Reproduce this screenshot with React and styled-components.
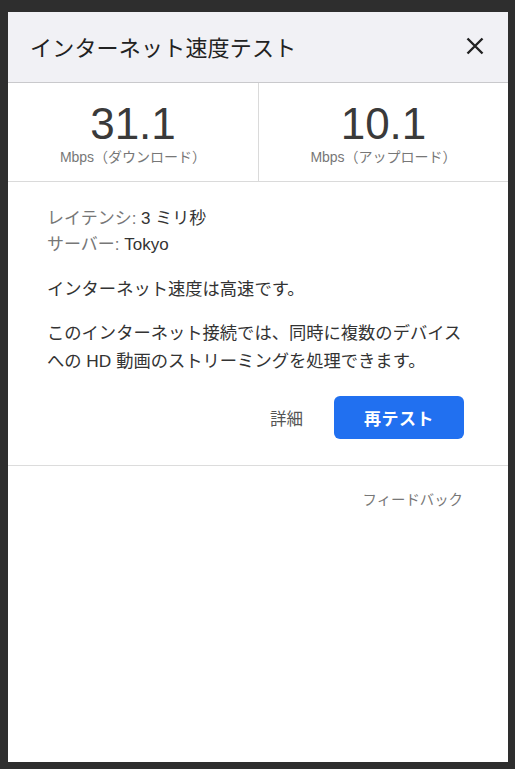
import React from "react";
import styled, { createGlobalStyle } from "styled-components";

const Global = createGlobalStyle`
  html, body { margin: 0; padding: 0; background: #2e2e2e; }
  body { font-family: "Liberation Sans", "Noto Sans CJK JP", sans-serif; }
  * { box-sizing: border-box; }
`;

const Backdrop = styled.div`
  width: 515px;
  height: 769px;
  padding: 12px 7px 7px 8px;
  background: #2e2e2e;
`;

const Dialog = styled.div`
  width: 500px;
  height: 750px;
  background: #fff;
  display: flex;
  flex-direction: column;
`;

const Header = styled.div`
  height: 71px;
  background: #f1f1f5;
  border-bottom: 1px solid #c9c9cc;
  display: flex;
  align-items: center;
  justify-content: space-between;
  padding: 0 24px 2px 22px;
`;

const Title = styled.h1`
  margin: 0;
  font-size: 22px;
  font-weight: 400;
  color: #222;
  letter-spacing: 0.2px;
`;

const CloseButton = styled.button`
  border: 0;
  background: none;
  padding: 0;
  width: 18px;
  height: 18px;
  display: flex;
  cursor: pointer;
`;

const Stats = styled.div`
  display: grid;
  grid-template-columns: 1fr 1fr;
  height: 99px;
  border-bottom: 1px solid #dadada;
`;

const Stat = styled.div`
  display: flex;
  flex-direction: column;
  align-items: center;
  padding-top: 17px;
  border-left: ${(p) => (p.$divider ? "1px solid #dadada" : "none")};
`;

const Value = styled.div`
  font-family: "Liberation Sans", Arial, sans-serif;
  font-size: 44px;
  line-height: 48px;
  color: #3a3a3a;
`;

const Unit = styled.div`
  font-size: 14px;
  line-height: 18px;
  color: #777;
  margin-top: 0px;
`;

const Body = styled.div`
  padding: 24px 44px 0 39px;
  display: flex;
  flex-direction: column;
`;

const InfoLine = styled.div`
  font-size: 17px;
  line-height: 26px;
  color: #333;
`;

const Label = styled.span`
  color: #777;
`;

const Message = styled.p`
  margin: ${(p) => p.$mt}px 0 0;
  font-size: 17.3px;
  line-height: ${(p) => p.$lh}px;
  color: #333;
`;

const Actions = styled.div`
  margin-top: 21px;
  display: flex;
  justify-content: flex-end;
  align-items: center;
  gap: 31px;
  padding-bottom: 26px;
`;

const LinkButton = styled.button`
  border: 0;
  background: none;
  font-family: inherit;
  font-size: 16.5px;
  color: #555;
  padding: 0;
  cursor: pointer;
`;

const PrimaryButton = styled.button`
  width: 130px;
  height: 43px;
  border: 0;
  border-radius: 6px;
  background: #2170f0;
  color: #fff;
  font-family: inherit;
  font-size: 17px;
  font-weight: 700;
  letter-spacing: 0.5px;
  cursor: pointer;
`;

const Footer = styled.div`
  border-top: 1px solid #dcdcdc;
  display: flex;
  justify-content: flex-end;
  padding: 24px 45px 0 0;
`;

const FeedbackLink = styled.a`
  font-size: 14.4px;
  line-height: 20px;
  color: #777;
  text-decoration: none;
  cursor: pointer;
`;

function CloseIcon() {
  return (
    <svg width="18" height="18" viewBox="0 0 18 18" fill="none">
      <path d="M1.5 1.5L16.5 16.5M16.5 1.5L1.5 16.5" stroke="#222" strokeWidth="2.4" strokeLinecap="butt" />
    </svg>
  );
}

export default function App() {
  return (
    <>
      <Global />
      <Backdrop>
        <Dialog>
          <Header>
            <Title>インターネット速度テスト</Title>
            <CloseButton aria-label="閉じる">
              <CloseIcon />
            </CloseButton>
          </Header>
          <Stats>
            <Stat>
              <Value>31.1</Value>
              <Unit>Mbps（ダウンロード）</Unit>
            </Stat>
            <Stat $divider>
              <Value>10.1</Value>
              <Unit>Mbps（アップロード）</Unit>
            </Stat>
          </Stats>
          <Body>
            <InfoLine>
              <Label>レイテンシ: </Label>3 ミリ秒
            </InfoLine>
            <InfoLine>
              <Label>サーバー: </Label>Tokyo
            </InfoLine>
            <Message $mt={18} $lh={26}>インターネット速度は高速です。</Message>
            <Message $mt={17} $lh={28}>
              このインターネット接続では、同時に複数のデバイス
              <br />
              への HD 動画のストリーミングを処理できます。
            </Message>
            <Actions>
              <LinkButton>詳細</LinkButton>
              <PrimaryButton>再テスト</PrimaryButton>
            </Actions>
          </Body>
          <Footer>
            <FeedbackLink>フィードバック</FeedbackLink>
          </Footer>
        </Dialog>
      </Backdrop>
    </>
  );
}
